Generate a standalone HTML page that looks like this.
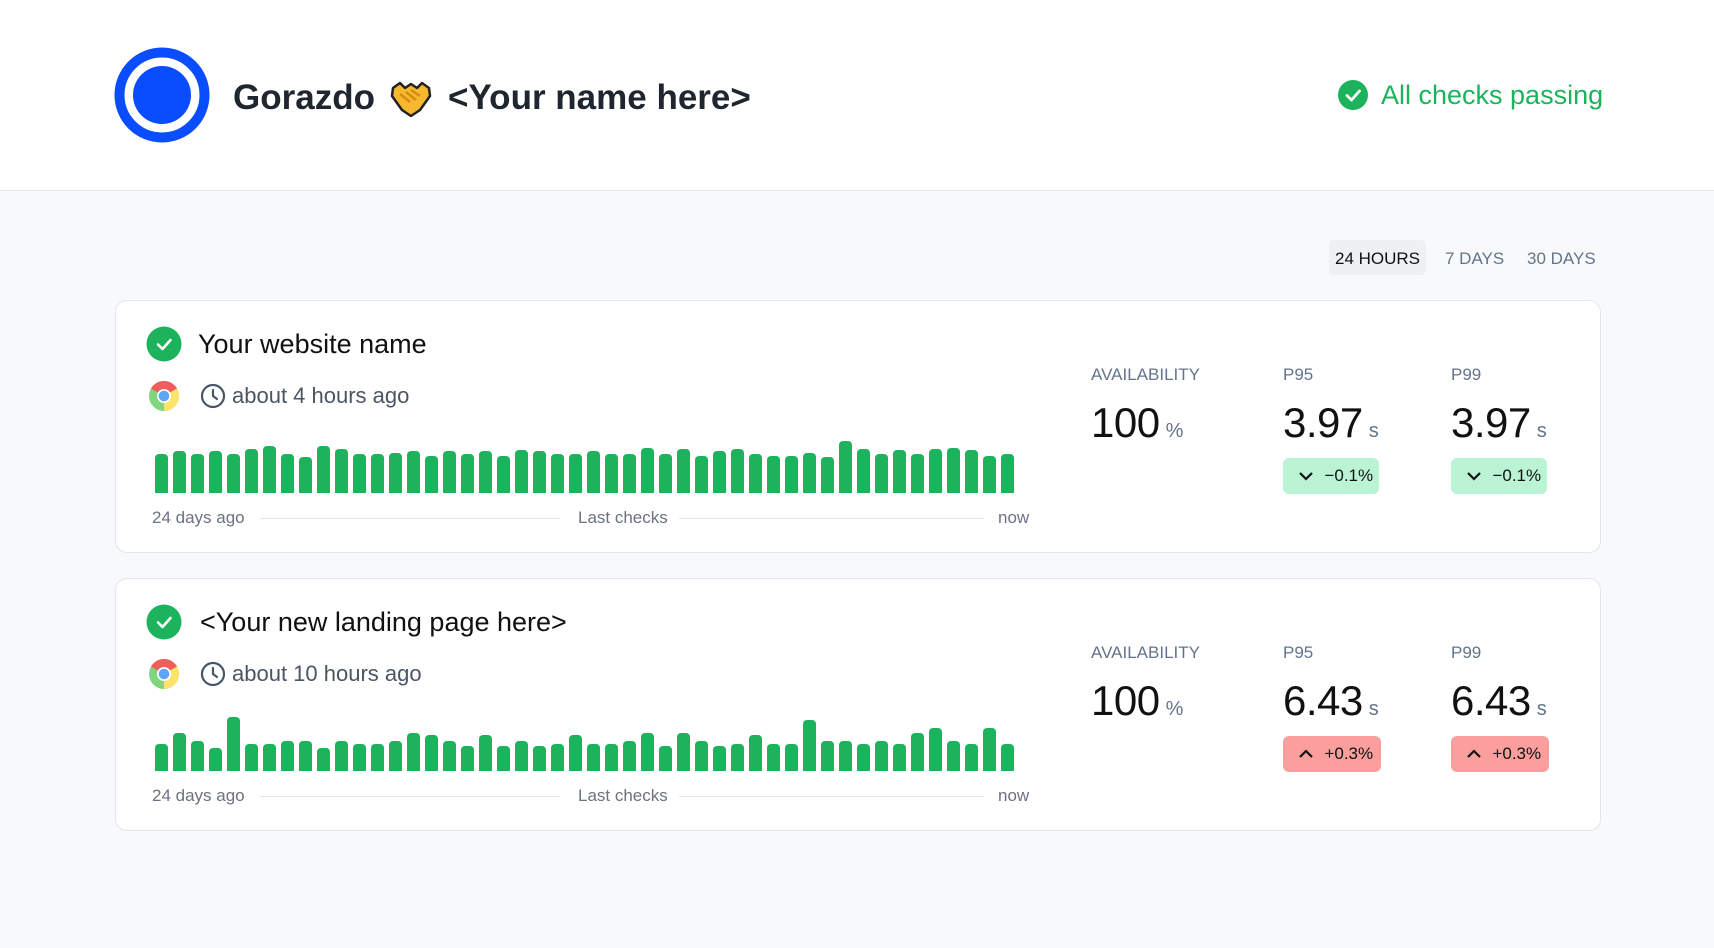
<!DOCTYPE html>
<html><head><meta charset="utf-8"><style>
*{margin:0;padding:0;box-sizing:border-box}
body{width:1714px;height:948px;background:#f8f9fb;font-family:"Liberation Sans",sans-serif;position:relative;overflow:hidden}
.hdr{position:absolute;left:0;top:0;width:1714px;height:191px;background:#fff;border-bottom:1px solid #e5e7eb}
.abs{position:absolute}
.card{position:absolute;left:115px;width:1486px;height:253px;background:#fff;border:1px solid #e2e6ec;border-radius:12px}
.bars{position:absolute;left:39px;top:110px;height:82px;width:860px;display:flex;align-items:flex-end;gap:5px}
.bars div{width:13px;background:#1db35c;border-radius:4px 4px 0 0}
.lbl{position:absolute;font-size:17px;color:#6b7280}
.line{position:absolute;height:1px;background:#e5e7eb;top:217px}
.sl{position:absolute;font-size:17px;color:#64748b;top:64px}
.big{position:absolute;top:98px;font-size:42px;color:#111;letter-spacing:-0.5px}
.big span{font-size:20px;color:#64748b;margin-left:6px;letter-spacing:0}
.badge{position:absolute;top:157px;height:36px;border-radius:6px;font-size:17px;color:#111;display:flex;align-items:center;padding-left:14px}
.g{background:#bbf3d5;width:96px}
.r{background:#fb9e9e;width:98px}
</style></head><body>
<div class="hdr">
 <svg class="abs" style="left:114px;top:47px" width="96" height="96"><circle cx="48" cy="48" r="42.5" fill="none" stroke="#0a4cff" stroke-width="10"/><circle cx="48" cy="48" r="29" fill="#0a4cff"/></svg>
 <div class="abs" style="left:233px;top:78px;font-size:35px;font-weight:bold;color:#1f2630">Gorazdo</div>
 <svg class="abs" style="left:390px;top:80px" width="42" height="38" viewBox="0 0 42 38"><path d="M3 8 L10 3 L15 8 L21 4 L27 8 L32 3 L39 8 L40 16 L30 30 L21 36 L12 30 L2 16Z" fill="#f5b82e" stroke="#222" stroke-width="2.5" stroke-linejoin="round"/><path d="M10 14 L20 22 M16 12 L26 20 M21 10 L30 16" stroke="#d48c10" stroke-width="2.5"/></svg>
 <div class="abs" style="left:448px;top:78px;font-size:35px;font-weight:bold;color:#1f2630">&lt;Your name here&gt;</div>
 <svg class="abs" style="left:1338px;top:80px" width="30" height="30"><circle cx="15" cy="15" r="15" fill="#1db35c"/><path d="M9 15.5 L13.5 20 L21.5 11" fill="none" stroke="#fff" stroke-width="2.8" stroke-linecap="round" stroke-linejoin="round"/></svg>
 <div class="abs" style="left:1381px;top:80px;font-size:27px;color:#1db35c">All checks passing</div>
</div>
<div class="abs" style="left:1329px;top:240px;width:97px;height:35px;background:#eef0f3;border-radius:5px"></div>
<div class="abs" style="left:1335px;top:249px;font-size:17px;color:#111">24 HOURS</div>
<div class="abs" style="left:1445px;top:249px;font-size:17px;color:#64748b">7 DAYS</div>
<div class="abs" style="left:1527px;top:249px;font-size:17px;color:#64748b">30 DAYS</div>

<div class="card" style="top:300px">
 <svg class="abs" style="left:30px;top:25px" width="36" height="36"><circle cx="18" cy="18" r="17.5" fill="#1db35c"/><path d="M12 18.5 L16.5 23 L24.5 14" fill="none" stroke="#fff" stroke-width="2.6" stroke-linecap="round" stroke-linejoin="round"/></svg>
 <div class="abs" style="left:82px;top:28px;font-size:27px;color:#111">Your website name</div>
 <svg class="abs" style="left:32px;top:79px" width="32" height="32" viewBox="0 0 32 32"><circle cx="16" cy="16" r="15" fill="#7fd67f"/><path d="M16 16 L3 8.5 A15 15 0 0 1 29 8.5Z" fill="#f15c5c"/><path d="M16 16 L29 8.5 A15 15 0 0 1 16 31Z" fill="#fde36a"/><circle cx="16" cy="16" r="7" fill="#fff"/><circle cx="16" cy="16" r="5.3" fill="#5ea5f5"/></svg>
 <svg class="abs" style="left:84px;top:82px" width="26" height="26"><circle cx="13" cy="13" r="11" fill="none" stroke="#475569" stroke-width="2.2"/><path d="M13 7 V13 L17 16" fill="none" stroke="#475569" stroke-width="2.2" stroke-linecap="round"/></svg>
 <div class="abs" style="left:116px;top:82px;font-size:22px;color:#4b5563">about 4 hours ago</div>
 <div class="bars" id="b1"></div>
 <div class="lbl" style="left:36px;top:207px">24 days ago</div>
 <div class="line" style="left:144px;width:300px"></div>
 <div class="lbl" style="left:462px;top:207px">Last checks</div>
 <div class="line" style="left:563px;width:305px"></div>
 <div class="lbl" style="left:882px;top:207px">now</div>
 <div class="sl" style="left:975px">AVAILABILITY</div>
 <div class="big" style="left:975px">100<span>%</span></div>
 <div class="sl" style="left:1167px">P95</div>
 <div class="big" style="left:1167px">3.97<span>s</span></div>
 <div class="badge g" style="left:1167px"><svg width="18" height="12"><path d="M3 3 L9 9 L15 3" fill="none" stroke="#111" stroke-width="2.2"/></svg>&nbsp;&nbsp;−0.1%</div>
 <div class="sl" style="left:1335px">P99</div>
 <div class="big" style="left:1335px">3.97<span>s</span></div>
 <div class="badge g" style="left:1335px"><svg width="18" height="12"><path d="M3 3 L9 9 L15 3" fill="none" stroke="#111" stroke-width="2.2"/></svg>&nbsp;&nbsp;−0.1%</div>
</div>

<div class="card" style="top:578px">
 <svg class="abs" style="left:30px;top:25px" width="36" height="36"><circle cx="18" cy="18" r="17.5" fill="#1db35c"/><path d="M12 18.5 L16.5 23 L24.5 14" fill="none" stroke="#fff" stroke-width="2.6" stroke-linecap="round" stroke-linejoin="round"/></svg>
 <div class="abs" style="left:84px;top:28px;font-size:27px;color:#111">&lt;Your new landing page here&gt;</div>
 <svg class="abs" style="left:32px;top:79px" width="32" height="32" viewBox="0 0 32 32"><circle cx="16" cy="16" r="15" fill="#7fd67f"/><path d="M16 16 L3 8.5 A15 15 0 0 1 29 8.5Z" fill="#f15c5c"/><path d="M16 16 L29 8.5 A15 15 0 0 1 16 31Z" fill="#fde36a"/><circle cx="16" cy="16" r="7" fill="#fff"/><circle cx="16" cy="16" r="5.3" fill="#5ea5f5"/></svg>
 <svg class="abs" style="left:84px;top:82px" width="26" height="26"><circle cx="13" cy="13" r="11" fill="none" stroke="#475569" stroke-width="2.2"/><path d="M13 7 V13 L17 16" fill="none" stroke="#475569" stroke-width="2.2" stroke-linecap="round"/></svg>
 <div class="abs" style="left:116px;top:82px;font-size:22px;color:#4b5563">about 10 hours ago</div>
 <div class="bars" id="b2"></div>
 <div class="lbl" style="left:36px;top:207px">24 days ago</div>
 <div class="line" style="left:144px;width:300px"></div>
 <div class="lbl" style="left:462px;top:207px">Last checks</div>
 <div class="line" style="left:563px;width:305px"></div>
 <div class="lbl" style="left:882px;top:207px">now</div>
 <div class="sl" style="left:975px">AVAILABILITY</div>
 <div class="big" style="left:975px">100<span>%</span></div>
 <div class="sl" style="left:1167px">P95</div>
 <div class="big" style="left:1167px">6.43<span>s</span></div>
 <div class="badge r" style="left:1167px"><svg width="18" height="12"><path d="M3 9 L9 3 L15 9" fill="none" stroke="#111" stroke-width="2.2"/></svg>&nbsp;&nbsp;+0.3%</div>
 <div class="sl" style="left:1335px">P99</div>
 <div class="big" style="left:1335px">6.43<span>s</span></div>
 <div class="badge r" style="left:1335px"><svg width="18" height="12"><path d="M3 9 L9 3 L15 9" fill="none" stroke="#111" stroke-width="2.2"/></svg>&nbsp;&nbsp;+0.3%</div>
</div>
<script>
var t1=[414,412,414,412,414,410,407,414,417,407,410,414,414,413,412,416,412,414,412,416,411,412,414,414,412,414,414,409,414,410,416,412,410,414,416,416,413,417,402,410,414,411,414,410,409,411,416,414];
var t2=[680,670,678,684,656,680,680,678,678,684,678,680,680,678,670,672,678,682,672,682,678,682,680,672,680,680,678,670,682,670,678,682,680,672,680,680,658,678,678,680,678,680,670,666,678,680,666,680];
function f(id,t,b){var e=document.getElementById(id);t.forEach(function(v){var d=document.createElement('div');d.style.height=Math.round((b-v)*1.093)+'px';e.appendChild(d);});}
f('b1',t1,450);f('b2',t2,705);
</script>
</body></html>
